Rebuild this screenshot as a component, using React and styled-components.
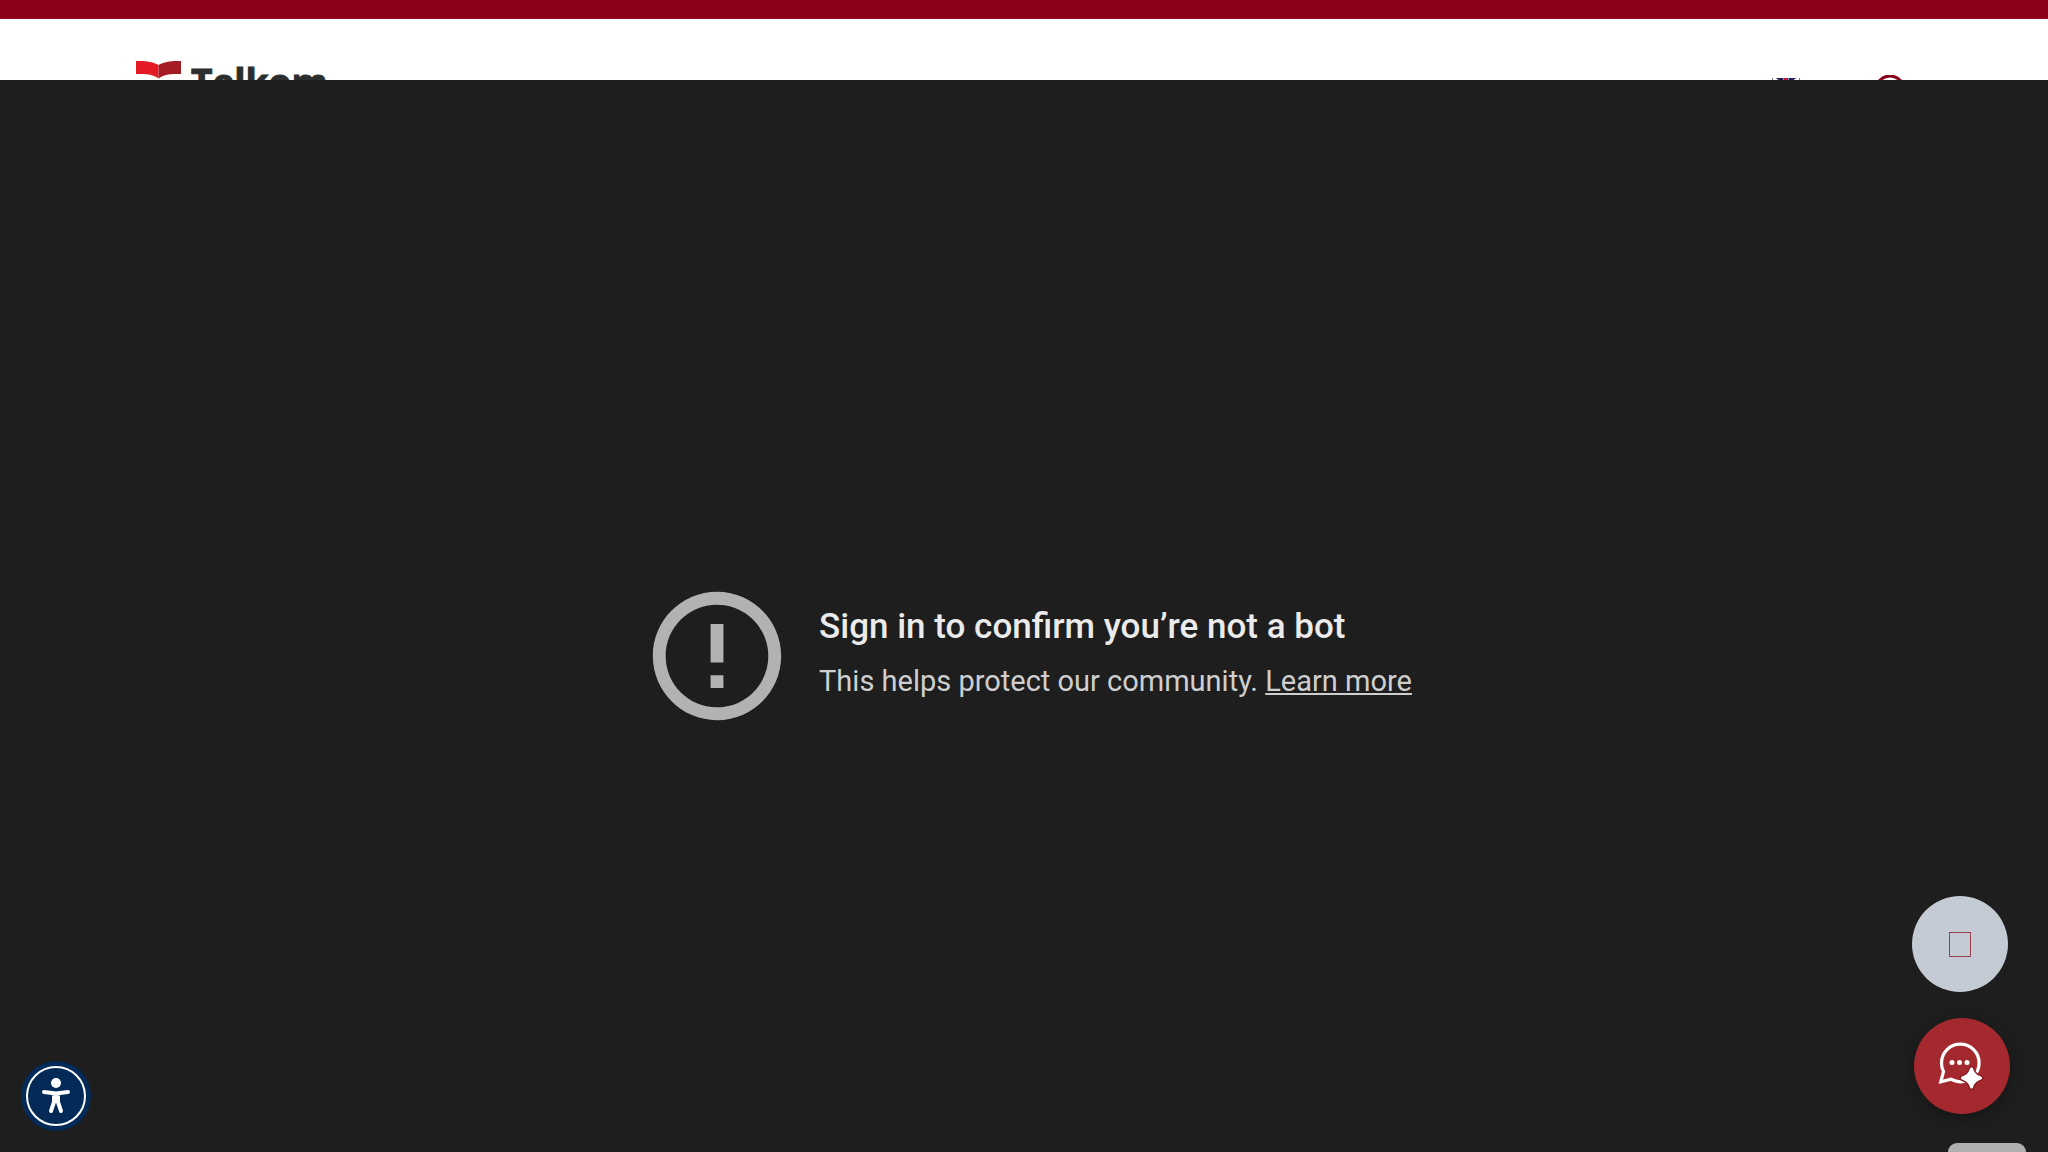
import React from 'react';
import styled, { createGlobalStyle } from 'styled-components';

const GlobalStyle = createGlobalStyle`
  * {
    box-sizing: border-box;
  }

  body {
    margin: 0;
    overflow: hidden;
    background: #ffffff;
    font-family: Roboto, "Liberation Sans", sans-serif;
  }
`;

const Page = styled.div`
  height: 100vh;
  overflow: hidden;
`;

const TopBar = styled.div`
  height: 19px;
  background: #8a0119;
`;

const Header = styled.header`
  display: flex;
  justify-content: space-between;
  align-items: flex-start;
  height: 61px;
  padding: 40px 142px 0 136px;
  overflow: hidden;
  background: #ffffff;
`;

const LogoLink = styled.a`
  display: flex;
  gap: 10px;
  color: #2b2e2e;
  text-decoration: none;
`;

const LogoText = styled.span`
  font-family: "Open Sans", sans-serif;
  font-size: 37px;
  font-weight: 700;
  line-height: 46px;
  -webkit-text-stroke: 1px #2b2e2e;
`;

const Tools = styled.nav`
  display: flex;
  gap: 74px;
  padding-top: 16px;
`;

const ToolButton = styled.button`
  display: flex;
  align-items: flex-start;
  padding: 0;
  border: 0;
  background: none;
  cursor: pointer;
`;

const Video = styled.main`
  display: flex;
  justify-content: center;
  align-items: center;
  gap: 25px;
  height: 100vh;
  padding-left: 4px;
  background: #1e1e1e;
`;

const Message = styled.div`
  display: flex;
  flex-direction: column;
  gap: 12px;
  padding-bottom: 6px;
`;

const Reason = styled.h1`
  margin: 0;
  color: #ebebeb;
  font-size: 35px;
  font-weight: 500;
  line-height: 44px;
`;

const SubReason = styled.p`
  margin: 0;
  color: #cfcfcf;
  font-size: 29px;
  line-height: 40px;

  a {
    color: inherit;
  }
`;

const FloatingButton = styled.button`
  position: fixed;
  right: ${({ $right }) => $right};
  bottom: ${({ $bottom }) => $bottom};
  display: flex;
  justify-content: center;
  align-items: center;
  width: 96px;
  height: 96px;
  padding: 0;
  border: 0;
  border-radius: 50%;
  background: ${({ $color }) => $color};
  box-shadow: ${({ $shadow }) => ($shadow ? '0 4px 16px rgba(0, 0, 0, 0.3)' : 'none')};
  cursor: pointer;
`;

const EmptyGlyph = styled.span`
  width: 22px;
  height: 25px;
  border: 1px solid #95404b;
`;

const AccessButton = styled.button`
  position: fixed;
  left: 21px;
  bottom: 21px;
  padding: 0;
  border: 0;
  border-radius: 50%;
  background: none;
  line-height: 0;
  cursor: pointer;
`;

const BadgeTab = styled.div`
  position: fixed;
  right: 22px;
  bottom: 0;
  width: 78px;
  height: 9px;
  border-radius: 10px 10px 0 0;
  background: #b0b0b0;
`;

const BookIcon = () => (
  <svg width="45" height="22" viewBox="0 0 45 22" aria-hidden="true">
    <path d="M0 2 C8 1.500 17 2.500 22.500 6 V19.500 C18 15.500 10 14.500 0 15 Z" fill="#e41a27" />
    <path d="M45 2 C37 1.500 28 2.500 22.500 6 V19.500 C27 15.500 35 14.500 45 15 Z" fill="#a51c24" />
  </svg>
);

const FlagIcon = () => (
  <svg width="28" height="21" viewBox="0 0 28 21" aria-hidden="true">
    <rect y="3" width="28" height="18" fill="#1d2358" />
    <path d="M1 3 L27 21 M27 3 L1 21" stroke="#ffffff" strokeWidth="3" />
    <path d="M14 3 V21 M0 12 H28" stroke="#ffffff" strokeWidth="5" />
    <path d="M14 3 V21 M0 12 H28" stroke="#c8193c" strokeWidth="4" />
  </svg>
);

const SearchIcon = () => (
  <svg width="32" height="32" viewBox="0 0 32 32" aria-hidden="true">
    <circle cx="16" cy="15" r="14" fill="none" stroke="#8a0119" strokeWidth="3" />
  </svg>
);

const ErrorIcon = () => (
  <svg width="154" height="154" viewBox="0 0 24 24" fill="#b2b2b2" aria-hidden="true">
    <path d="M11 15h2v2h-2zm0-8h2v6h-2zm1-5C6.480 2 2 6.480 2 12s4.480 10 10 10 10-4.480 10-10S17.520 2 12 2zm0 18c-4.420 0-8-3.580-8-8s3.580-8 8-8 8 3.580 8 8-3.580 8-8 8z" />
  </svg>
);

const ChatIcon = () => (
  <svg width="48" height="48" viewBox="0 0 48 48" fill="none" aria-hidden="true">
    <path
      d="M5.500 29.500 C4 27 3.500 24 3.500 21 A18.800 18.800 0 1 1 22.300 39.800 C18.500 39.800 15.500 38.500 13 37.300 L2.800 39.800 Z"
      stroke="#ffffff"
      strokeWidth="3.200"
      strokeLinejoin="miter"
    />
    <g fill="#ffffff">
      <circle cx="14" cy="20.500" r="2.500" />
      <circle cx="21.500" cy="20.500" r="2.500" />
      <circle cx="29" cy="20.500" r="2.500" />
    </g>
    <path
      d="M33.500 27 Q35.500 34 42.500 36 Q35.500 38 33.500 45 Q31.500 38 24.500 36 Q31.500 34 33.500 27 Z"
      stroke="#8a1c22"
      strokeWidth="6"
      strokeLinejoin="round"
    />
    <path
      d="M33.500 27 Q35.500 34 42.500 36 Q35.500 38 33.500 45 Q31.500 38 24.500 36 Q31.500 34 33.500 27 Z"
      fill="#ffffff"
      stroke="#ffffff"
      strokeWidth="3"
      strokeLinejoin="round"
    />
  </svg>
);

const AccessIcon = () => (
  <svg width="70" height="70" viewBox="0 0 70 70" aria-hidden="true">
    <circle cx="35" cy="35" r="35" fill="#042b57" />
    <circle cx="35" cy="35" r="29" fill="none" stroke="#ffffff" strokeWidth="2" />
    <circle cx="35" cy="22" r="5" fill="#ffffff" />
    <path
      d="M23 31 L35 32.500 L47 31 M35 34 V40 M33 33 V41 L30 50 M37 33 V41 L40 50"
      fill="none"
      stroke="#ffffff"
      strokeWidth="4"
      strokeLinecap="round"
      strokeLinejoin="round"
    />
  </svg>
);

const App = () => (
  <Page>
    <GlobalStyle />
    <TopBar />
    <Header>
      <LogoLink href="#home">
        <BookIcon />
        <LogoText>Telkom</LogoText>
      </LogoLink>
      <Tools>
        <ToolButton aria-label="Language">
          <FlagIcon />
        </ToolButton>
        <ToolButton aria-label="Search">
          <SearchIcon />
        </ToolButton>
      </Tools>
    </Header>
    <Video>
      <ErrorIcon />
      <Message>
        <Reason>Sign in to confirm you’re not a bot</Reason>
        <SubReason>
          This helps protect our community. <a href="#learn-more">Learn more</a>
        </SubReason>
      </Message>
    </Video>
    <FloatingButton $right="40px" $bottom="160px" $color="#c5cbd5" aria-label="Back to top">
      <EmptyGlyph />
    </FloatingButton>
    <FloatingButton $right="38px" $bottom="38px" $color="#a4292e" $shadow aria-label="Chat">
      <ChatIcon />
    </FloatingButton>
    <AccessButton aria-label="Accessibility">
      <AccessIcon />
    </AccessButton>
    <BadgeTab />
  </Page>
);

export default App;
